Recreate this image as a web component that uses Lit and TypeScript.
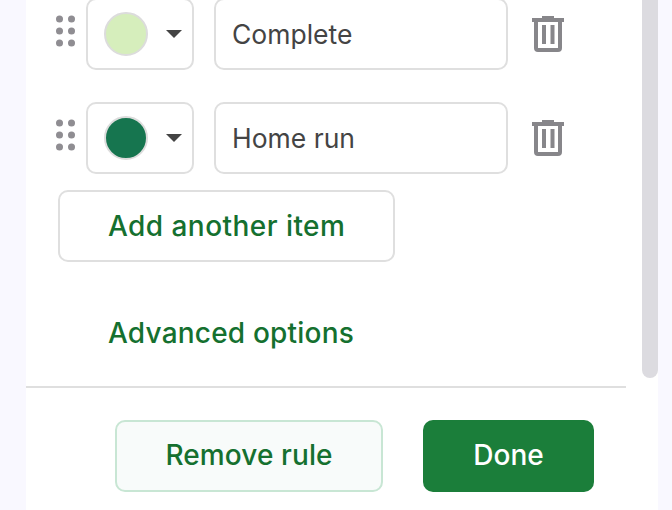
import { LitElement, html, svg, css } from 'lit';
import { customElement, property } from 'lit/decorators.js';

const trash = html`<svg class="trash" width="32" height="36" viewBox="0 0 32 36">
  <rect x="10" y="0" width="12" height="3" fill="#87868a"></rect>
  <rect x="0" y="2" width="32" height="4" fill="#87868a"></rect>
  <path fill="#87868a" fill-rule="evenodd" d="M2 6h28v26a4 4 0 0 1-4 4H6a4 4 0 0 1-4-4ZM6 6v26h20V6Z"></path>
  <rect x="10" y="9" width="4" height="19" fill="#87868a"></rect>
  <rect x="18.5" y="9" width="4" height="19" fill="#87868a"></rect>
</svg>`;

const dots = html`<svg class="dots" width="20" height="32" viewBox="0 0 20 32">
  ${[0, 12, 24].map(
    (y) => svg`<circle cx="3.5" cy=${y + 4} r="3.5" fill="#8f8d92"></circle>
      <circle cx="15.5" cy=${y + 4} r="3.5" fill="#8f8d92"></circle>`
  )}
</svg>`;

@customElement('chip-row')
export class ChipRow extends LitElement {
  static styles = css`
    :host {
      display: flex;
      align-items: center;
      height: 72px;
    }
    .dots {
      margin: -6px 10px 0 0;
      flex: none;
    }
    .swatch-box {
      box-sizing: border-box;
      width: 108px;
      height: 72px;
      border: 2px solid #dfdfdf;
      border-radius: 10px;
      display: flex;
      align-items: center;
      padding-left: 16px;
      flex: none;
    }
    .swatch {
      box-sizing: border-box;
      width: 44px;
      height: 44px;
      border-radius: 50%;
      border: 2px solid #dcdcdc;
    }
    .caret {
      margin-left: 18px;
      width: 0;
      height: 0;
      border-left: 8px solid transparent;
      border-right: 8px solid transparent;
      border-top: 8px solid #444;
    }
    .field {
      box-sizing: border-box;
      width: 294px;
      height: 72px;
      margin-left: 20px;
      border: 2px solid #dfdfdf;
      border-radius: 10px;
      display: flex;
      align-items: center;
      padding-left: 16px;
      font-size: 26.5px;
      font-weight: 400;
      color: #444;
      flex: none;
    }
    .trash {
      margin-left: 24px;
      flex: none;
    }
  `;

  @property({ type: String }) label = '';
  @property({ type: String }) color = '';

  render() {
    return html`
      ${dots}
      <div class="swatch-box">
        <div class="swatch" style="background:${this.color}"></div>
        <div class="caret"></div>
      </div>
      <div class="field">${this.label}</div>
      ${trash}
    `;
  }
}

@customElement('app-root')
export class AppRoot extends LitElement {
  static styles = css`
    :host {
      display: flex;
      width: 672px;
      height: 510px;
      overflow: hidden;
      background: #f9f8ff;
      font-family: 'Inter', 'Roboto', sans-serif;
      font-size: 28px;
      font-weight: 500;
    }
    .panel {
      width: 600px;
      margin-left: 26px;
      background: #fff;
      display: flex;
      flex-direction: column;
      flex: none;
    }
    .gutter {
      width: 16px;
      background: #fff;
      flex: none;
    }
    .track {
      width: 16px;
      background: #fff;
      flex: none;
    }
    .thumb {
      height: 378px;
      background: #dcdbe0;
      border-radius: 0 0 8px 8px;
    }
    .scroll {
      height: 388px;
      box-sizing: border-box;
      margin-top: -2px;
      padding: 0 0 0 30px;
      display: flex;
      flex-direction: column;
      flex: none;
    }
    chip-row + chip-row {
      margin-top: 32px;
    }
    .add {
      box-sizing: border-box;
      width: 337px;
      height: 72px;
      margin: 16px 0 0 2px;
      padding-left: 48px;
      border: 2px solid #dfdfdf;
      border-radius: 10px;
      display: flex;
      align-items: center;
      color: #15702f;
      letter-spacing: 0.45px;
    }
    .advanced {
      margin: 53px 0 0 52px;
      line-height: 36px;
      color: #15702f;
      letter-spacing: 0.2px;
    }
    .divider {
      height: 2px;
      background: #dfdfdf;
      flex: none;
    }
    .footer {
      display: flex;
      padding: 32px 0 0 89px;
      gap: 40px;
    }
    .btn {
      box-sizing: border-box;
      height: 72px;
      padding-bottom: 2px;
      border-radius: 10px;
      display: flex;
      align-items: center;
      justify-content: center;
    }
    .remove {
      width: 268px;
      border: 2px solid #c8e6d4;
      background: #f8fbfa;
      color: #15702f;
      letter-spacing: 0.1px;
    }
    .done {
      width: 171px;
      background: #1b7e3a;
      color: #fff;
    }
  `;

  render() {
    return html`
      <div class="panel">
        <div class="scroll">
          <chip-row label="Complete" color="#d6eebc"></chip-row>
          <chip-row label="Home run" color="#16754f"></chip-row>
          <div class="add">Add another item</div>
          <div class="advanced">Advanced options</div>
        </div>
        <div class="divider"></div>
        <div class="footer">
          <div class="btn remove">Remove rule</div>
          <div class="btn done">Done</div>
        </div>
      </div>
      <div class="gutter"></div>
      <div class="track"><div class="thumb"></div></div>
    `;
  }
}
